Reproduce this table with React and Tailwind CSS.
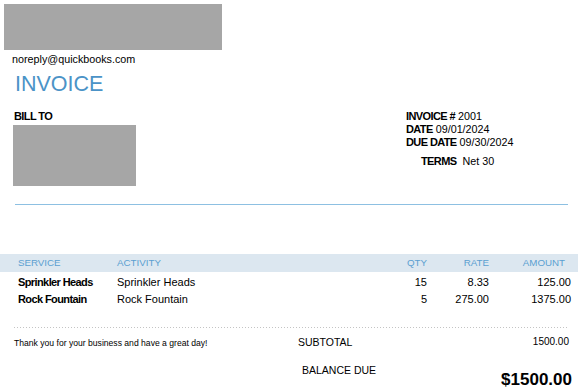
const items = [
  { service: 'Sprinkler Heads', activity: 'Sprinkler Heads', qty: '15', rate: '8.33', amount: '125.00' },
  { service: 'Rock Fountain', activity: 'Rock Fountain', qty: '5', rate: '275.00', amount: '1375.00' },
]

function Label({ children }) {
  return <span className="font-bold tracking-[-0.6px] text-[11px]">{children}</span>
}

export default function App() {
  return (
    <div className="w-[578px] h-[390px] overflow-hidden bg-white text-black font-['Liberation_Sans',Arial,sans-serif]">
      {/* logo placeholder */}
      <div className="mt-[4px] ml-[4px] w-[218px] h-[46px] bg-[#a6a6a6]" />
      <div className="ml-[12px] mt-[3px] text-[10.75px] leading-[13px]">noreply@quickbooks.com</div>
      <div className="ml-[15px] mt-[6px] text-[21.5px] leading-[25px] text-[#4b93c7]">INVOICE</div>

      {/* bill to + invoice meta */}
      <div className="flex pl-[13px] mt-[13px]">
        <div className="w-[393px]">
          <div className="pl-[1px] text-[11px] leading-[13px]">
            <Label>BILL TO</Label>
          </div>
          <div className="mt-[2px] w-[123px] h-[61px] bg-[#a6a6a6]" />
        </div>
        <div className="text-[10.75px] leading-[13px]">
          <div><Label>INVOICE #</Label> 2001</div>
          <div><Label>DATE</Label> 09/01/2024</div>
          <div><Label>DUE DATE</Label> 09/30/2024</div>
          <div className="mt-[6px] pl-[15px] flex gap-[6px]">
            <Label>TERMS</Label>
            <span>Net 30</span>
          </div>
        </div>
      </div>

      <div className="mt-[18px] ml-[15px] w-[553px] h-px bg-[#8dc0e2]" />

      {/* items table */}
      <div className="mt-[49px]">
        <div className="flex items-center h-[18px] bg-[#dce7f0] text-[9.75px] text-[#5b9fd0]">
          <div className="pl-[18px] w-[117px]">SERVICE</div>
          <div className="flex-1">ACTIVITY</div>
          <div className="w-[60px] text-right">QTY</div>
          <div className="w-[62px] text-right">RATE</div>
          <div className="w-[82px] pr-[6px] text-right">AMOUNT</div>
          <div className="w-[7px]" />
        </div>
        <div className="pt-[2px] text-[11px] leading-[17px]">
          {items.map((it) => (
            <div key={it.service} className="flex">
              <div className="pl-[18px] w-[117px] font-bold tracking-[-0.6px]">{it.service}</div>
              <div className="flex-1">{it.activity}</div>
              <div className="w-[60px] text-right">{it.qty}</div>
              <div className="w-[62px] text-right">{it.rate}</div>
              <div className="w-[82px] text-right">{it.amount}</div>
              <div className="w-[7px]" />
            </div>
          ))}
        </div>
      </div>

      <div className="mt-[19px] ml-[14px] w-[553px] h-px bg-[repeating-linear-gradient(to_right,#c4c4c4_0_1px,transparent_1px_3px)]" />

      {/* totals */}
      <div className="flex">
        <div className="pl-[14px] w-[298px] mt-[9px] text-[8.6px] leading-[12px]">
          Thank you for your business and have a great day!
        </div>
        <div className="flex-1 pr-[9px]">
          <div className="mt-[7px] flex justify-between text-[10.5px] leading-[14px]">
            <span>SUBTOTAL</span>
            <span className="text-[10px]">1500.00</span>
          </div>
          <div className="mt-[14px] flex justify-between items-start">
            <span className="pl-[4px] text-[10.5px] leading-[14px]">BALANCE DUE</span>
            <span className="mt-[7px] mr-[-3px] text-[17px] leading-[20px] font-bold">$1500.00</span>
          </div>
        </div>
      </div>
    </div>
  )
}
